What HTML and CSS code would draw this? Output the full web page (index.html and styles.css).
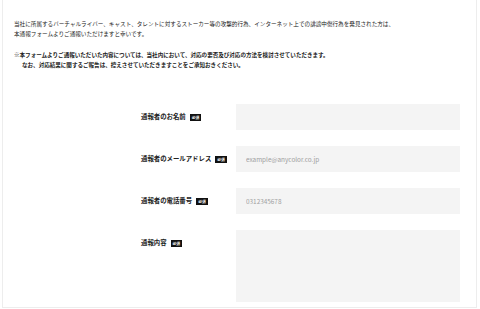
FILE: index.html
```html
<!DOCTYPE html>
<html lang="ja">
<head>
    <meta charset="UTF-8">
    <meta name="viewport" content="width=device-width, initial-scale=1.0">
    <title>通報フォーム</title>
    <link rel="stylesheet" href="styles.css">
</head>
<body>
    <div class="form-page">
        <section class="intro">
            <p class="intro-text">当社に所属するバーチャルライバー、キャスト、タレントに対するストーカー等の攻撃的行為、インターネット上での誹謗中傷行為を発見された方は、<br>本通報フォームよりご通報いただけますと幸いです。</p>
            <p class="intro-note">※本フォームよりご通報いただいた内容については、当社内において、対応の要否及び対応の方法を検討させていただきます。<br><span class="indent">なお、対応結果に関するご報告は、控えさせていただきますことをご承知おきください。</span></p>
        </section>

        <form class="report-form">
            <div class="form-row">
                <label class="form-label" for="name">通報者のお名前<span class="required">必須</span></label>
                <input class="form-input" type="text" id="name">
            </div>
            <div class="form-row">
                <label class="form-label" for="email">通報者のメールアドレス<span class="required">必須</span></label>
                <input class="form-input" type="email" id="email" placeholder="example@anycolor.co.jp">
            </div>
            <div class="form-row">
                <label class="form-label" for="tel">通報者の電話番号<span class="required">必須</span></label>
                <input class="form-input" type="tel" id="tel" placeholder="0312345678">
            </div>
            <div class="form-row">
                <label class="form-label" for="body">通報内容<span class="required">必須</span></label>
                <textarea class="form-input form-textarea" id="body"></textarea>
            </div>
        </form>
    </div>
</body>
</html>
```

FILE: styles.css
```css
/* 基本 */
body {
    font-family: "Noto Sans CJK JP", "Noto Sans", sans-serif;
    margin: 0;
    background-color: #fff;
    color: #222;
}

.form-page {
    margin: 0 3px 0 2px;
    height: 308px;
    border: 1px solid #ededed;
    border-top: none;
    box-sizing: border-box;
}

/* 導入文 */
.intro {
    padding: 19px 0 0 11px;
}
.intro-text {
    margin: 0;
    font-size: 5.6px;
    line-height: 10px;
}
.intro-note {
    margin: 12px 0 0 0;
    font-size: 5.55px;
    line-height: 9.5px;
    font-weight: 700;
}
.indent {
    padding-left: 8px;
}

/* フォーム */
.report-form {
    margin: 34px 0 0 138px;
    display: flex;
    flex-direction: column;
    gap: 16px;
}
.form-row {
    display: grid;
    grid-template-columns: 95px 224px;
    align-items: start;
}
.form-label {
    font-size: 6.4px;
    line-height: 26px;
    font-weight: 700;
    display: flex;
    align-items: center;
}
.required {
    display: inline-block;
    margin-left: 4px;
    padding: 0 2px;
    background-color: #111;
    color: #fff;
    font-size: 3.8px;
    line-height: 7px;
    font-weight: 700;
}
.form-input {
    display: block;
    width: 100%;
    height: 26px;
    margin: 0;
    padding: 0 10px;
    border: none;
    background-color: #f4f4f4;
    font-family: inherit;
    font-size: 6.4px;
    font-weight: 400;
    color: #333;
    box-sizing: border-box;
    outline: none;
}
.form-input::placeholder {
    color: #a0a0a0;
}
.form-textarea {
    height: 72px;
    resize: none;
}
```
